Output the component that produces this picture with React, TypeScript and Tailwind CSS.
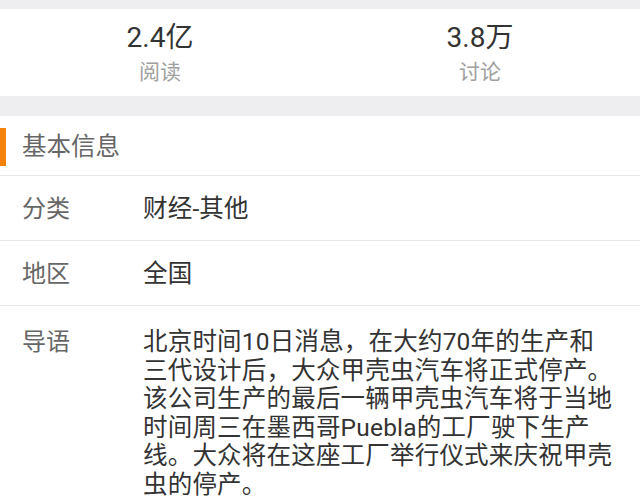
import React from "react";

const font = { fontFamily: 'Roboto, "Noto Sans CJK SC", "Noto Sans", sans-serif' };

function Stat({ value, label }: { value: string; label: string }) {
  return (
    <div className="flex flex-1 flex-col items-center">
      <div className="text-[28px] leading-[32px] text-[#333333]">{value}</div>
      <div className="mt-[4px] text-[21px] leading-[28px] text-[#a0a0a0]">{label}</div>
    </div>
  );
}

function Row({ label, children, top }: { label: string; children: React.ReactNode; top?: boolean }) {
  return (
    <div className={`flex border-b border-[#e8e8e8] ${top ? "items-start pt-[22px] pb-[10px]" : "h-[65px] items-center pt-[3px]"}`}>
      <div className="w-[143px] shrink-0 pl-[22px] text-[24px] leading-[28.6px] text-[#666666]">{label}</div>
      <div className="flex-1 pr-[10px] text-[24.5px] leading-[28.6px] tracking-[0.2px] text-[#333333]">{children}</div>
    </div>
  );
}

export default function App() {
  return (
    <div className="h-[501px] w-[640px] overflow-hidden bg-[#eeeef0]" style={font}>
      <div className="h-[9px]" />
      <div className="flex h-[87px] items-center bg-white pt-[2px]">
        <Stat value="2.4亿" label="阅读" />
        <Stat value="3.8万" label="讨论" />
      </div>
      <div className="h-[20px]" />
      <div className="bg-white">
        <div className="flex h-[60px] items-center border-b border-[#e8e8e8]">
          <div className="mt-[2px] h-[38px] w-[6px] bg-[#f5820b]" />
          <div className="pl-[16px] pt-[4px] text-[24.5px] text-[#666666]">基本信息</div>
        </div>
        <Row label="分类">财经-其他</Row>
        <Row label="地区">全国</Row>
        <Row label="导语" top>
          北京时间10日消息，在大约70年的生产和
          <br />
          三代设计后，大众甲壳虫汽车将正式停产。
          <br />
          该公司生产的最后一辆甲壳虫汽车将于当地
          <br />
          时间周三在墨西哥Puebla的工厂驶下生产
          <br />
          线。大众将在这座工厂举行仪式来庆祝甲壳
          <br />
          虫的停产。
        </Row>
      </div>
    </div>
  );
}
